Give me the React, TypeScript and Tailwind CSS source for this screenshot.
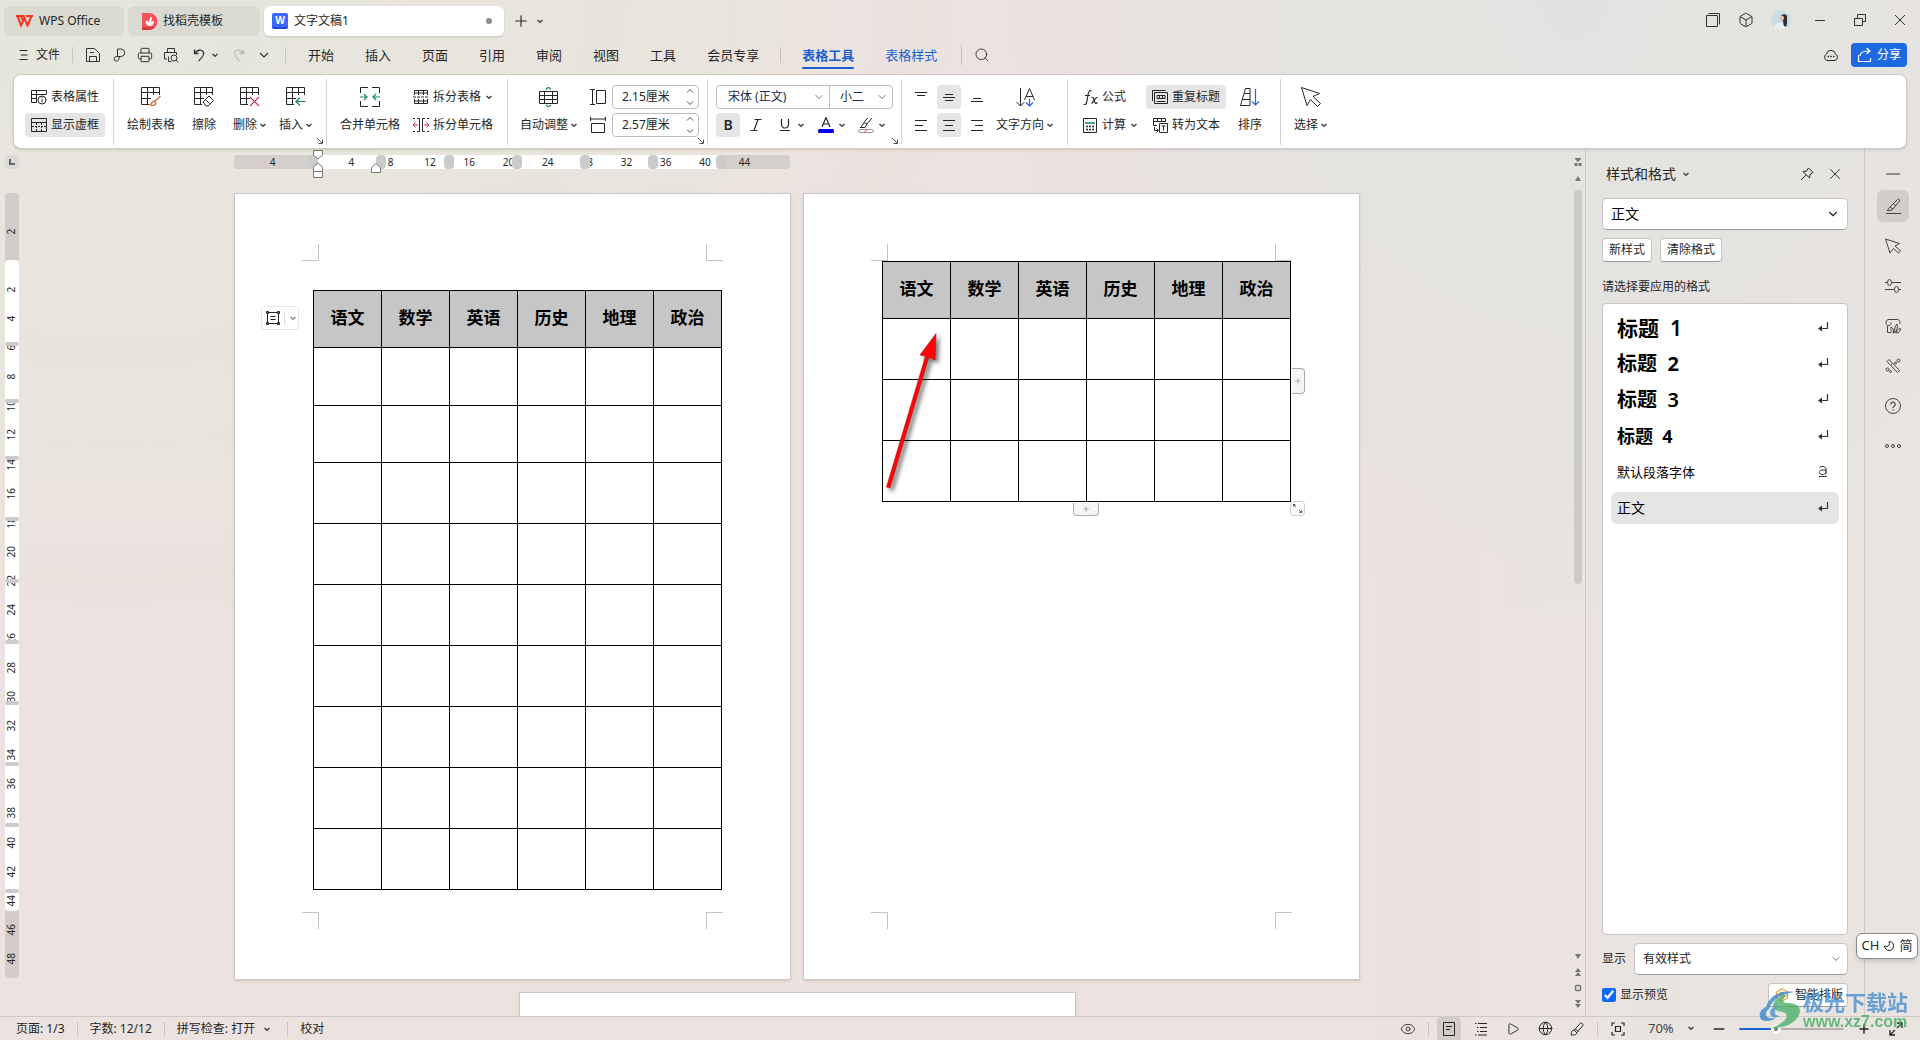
import type { ReactNode } from "react";
import {
  Box,
  ChevronDown,
  Eye,
  Globe,
  Minus,
  Moon,
  Play,
  Plus,
  Printer,
  Search,
  X,
} from "lucide-react";

const MENU_ITEMS = ["开始", "插入", "页面", "引用", "审阅", "视图", "工具", "会员专享"];

const SUBJECTS = ["语文", "数学", "英语", "历史", "地理", "政治"];

const H_TICKS = ["4", "", "4", "8", "12", "16", "20", "24", "28", "32", "36", "40", "44"];

const V_TICKS = ["2", "", ...Array.from({ length: 24 }, (_, i) => String((i + 1) * 2))];

// 表格行边界在垂直标尺上的位置
const ROW_EDGES = [149, 206, 263, 324, 386, 447, 508, 569, 630, 696];

const STYLES = [
  { label: "标题 1", className: "text-[21px] font-semibold", mark: "para" },
  { label: "标题 2", className: "text-[20px] font-bold", mark: "para" },
  { label: "标题 3", className: "text-[20px] font-semibold", mark: "para" },
  { label: "标题 4", className: "text-[18px] font-bold", mark: "para" },
  { label: "默认段落字体", className: "text-[13px]", mark: "char" },
  { label: "正文", className: "text-[14px]", mark: "para" },
];

function Svg({ size = 16, className = "", children }: { size?: number; className?: string; children: ReactNode }) {
  return (
    <svg
      width={size}
      height={size}
      viewBox={`0 0 ${size} ${size}`}
      fill="none"
      stroke="currentColor"
      strokeWidth="1"
      className={`shrink-0 ${className}`}
      aria-hidden="true"
    >
      {children}
    </svg>
  );
}

function Caret({ className = "" }: { className?: string }) {
  return (
    <svg width="8" height="8" viewBox="0 0 8 8" fill="none" stroke="#444" strokeWidth="1.5" className={`shrink-0 ${className}`} aria-hidden="true">
      <path d="M1.5 3 4 5.3 6.500 3" />
    </svg>
  );
}

const GRID_20 = "M8 17.500H.5V.5h18V8M.5 5.500h18M6.500 .5v17M.5 11.500H10M12.500 .5V8";

/* ---------- 功能区按钮 ---------- */

function BigButton({ icon, label, caret, className }: { icon: ReactNode; label: string; caret?: boolean; className: string }) {
  return (
    <button type="button" className={`flex flex-col items-center gap-1 ${className}`}>
      <span className="flex h-6 items-center">{icon}</span>
      <span className="flex h-6 items-center gap-0.5 whitespace-nowrap">
        {label}
        {caret && <Caret />}
      </span>
    </button>
  );
}

function SmallButton({ icon, label, caret, active }: { icon: ReactNode; label: string; caret?: boolean; active?: boolean }) {
  return (
    <button
      type="button"
      className={`flex h-6 items-center gap-1 rounded px-1.5 whitespace-nowrap ${active ? "bg-[#e5e5e5]" : ""}`}
    >
      {icon}
      {label}
      {caret && <Caret />}
    </button>
  );
}

function IconButton({ label, active, children }: { label: string; active?: boolean; children: ReactNode }) {
  return (
    <button
      type="button"
      aria-label={label}
      className={`flex size-6 shrink-0 items-center justify-center rounded ${active ? "bg-[#e5e5e5]" : ""}`}
    >
      {children}
    </button>
  );
}

function Group({ className = "", launcher, children }: { className?: string; launcher?: boolean; children: ReactNode }) {
  return (
    <div className={`relative flex h-[66px] shrink-0 items-start border-r border-[#d4d4d4] pt-1.5 ${className}`}>
      {children}
      {launcher && (
        <button type="button" aria-label="更多设置" className="absolute right-0.5 bottom-0 text-[#555]">
          <Svg size={8}>
            <path d="M1 1l5 5M6.500 2.500v4h-4" />
          </Svg>
        </button>
      )}
    </div>
  );
}

function SizeInput({ label, value }: { label: string; value: string }) {
  return (
    <div className="flex h-6 w-[87px] items-center rounded border border-[#bdbdbd] pr-1">
      <input aria-label={label} defaultValue={value} className="w-full min-w-0 bg-transparent pl-[9px] outline-none" />
      <div className="flex flex-col gap-1 text-[#555]">
        <button type="button" aria-label="增加">
          <Svg size={8}>
            <path d="M1 5.500 4 2.500 7 5.500" />
          </Svg>
        </button>
        <button type="button" aria-label="减少">
          <Svg size={8}>
            <path d="M1 2.500 4 5.500 7 2.500" />
          </Svg>
        </button>
      </div>
    </div>
  );
}

function AlignIcon({ d }: { d: string }) {
  return (
    <Svg size={14}>
      <path d={d} />
    </Svg>
  );
}

/* ---------- 标题栏 ---------- */

function TitleBar() {
  return (
    <header className="flex h-9 shrink-0 items-end gap-1 pl-1">
      <button type="button" className="flex h-[30px] w-[120px] items-center gap-1.5 rounded-md bg-[#dadad1] pl-3">
        <svg width="17" height="12" viewBox="0 0 17 12" fill="none" stroke="#f5341f" strokeWidth="2" aria-hidden="true">
          <path d="M0 1h8.500M10 1h7M1.500 1l3.500 9.500L8.500 3l3 7.500L15.500 1M5 1l1.500 4" />
        </svg>
        WPS Office
      </button>
      <button type="button" className="flex h-[30px] w-[132px] items-center gap-1.5 rounded-md bg-[#dadad3] pl-3.5">
        <svg width="15" height="17" viewBox="0 0 15 17" aria-hidden="true">
          <path d="M0 0h7a8 8 0 0 1 0 17H0z" fill="#f1545a" />
          <path d="M0 14h13a8 8 0 0 1-5 3H0z" fill="#d93640" />
          <path d="M7.500 13C3 12 3.500 8.500 4 7.500c1.500 0 2.500 1 3 2.500 0-3 .5-5 2.500-6.500C10.500 6 9.500 8 8.500 10c1-1.500 2-2 3.500-2 0 3-1.500 5-4.500 5z" fill="#fff" />
        </svg>
        找稻壳模板
      </button>
      <div className="flex h-[30px] w-[240px] items-center gap-1.5 rounded-md bg-white pr-3 pl-2 shadow-sm">
        <span className="flex h-4 w-4 items-center justify-center rounded-[2px] border-b-2 border-[#1d49d8] bg-[#3c69fb] text-[10px] leading-3 font-bold text-white">
          W
        </span>
        <span className="flex-1">文字文稿1</span>
        <span className="size-1.5 rounded-full bg-[#8b8b8b]" />
      </div>
      <div className="flex h-[30px] items-center gap-1.5 pl-1">
        <button type="button" aria-label="新建">
          <Plus size={18} strokeWidth={1.5} />
        </button>
        <button type="button" aria-label="标签列表">
          <Caret />
        </button>
      </div>
      <div className="ml-auto flex h-[32px] items-center gap-[17px] pr-3 text-[#333]">
        <button type="button" aria-label="窗口">
          <Svg>
            <path d="M1.500 3.500h11v11h-11zM3.500 1.500h11v11" />
          </Svg>
        </button>
        <button type="button" aria-label="应用">
          <Box size={16} strokeWidth={1.5} />
        </button>
        <button type="button" aria-label="账户" className="flex size-5 items-center justify-center overflow-hidden rounded-full bg-[#c9dde2]">
          <svg width="20" height="20" viewBox="0 0 20 20" aria-hidden="true">
            <path d="M3 20c0-5 3-8 7-7l5 5-1 2z" fill="#e8f2f4" />
            <path d="M9 7c1-3 6-4 7-1l0 7c0 3-1 4-3 3l-1-5z" fill="#352a32" />
            <circle cx="10.500" cy="8" r="2.500" fill="#e4bfb0" />
          </svg>
        </button>
        <div className="ml-1 flex items-center gap-6">
          <button type="button" aria-label="最小化">
            <Svg>
              <path d="M3 8.500h10" />
            </Svg>
          </button>
          <button type="button" aria-label="还原">
            <Svg>
              <path d="M2.500 6.500h8v7h-8zM5.500 6V2.500h8v7H11" />
            </Svg>
          </button>
          <button type="button" aria-label="关闭">
            <Svg>
              <path d="M3 3l10 10M13 3 3 13" />
            </Svg>
          </button>
        </div>
      </div>
    </header>
  );
}

/* ---------- 菜单栏 ---------- */

function MenuBar() {
  return (
    <nav className="flex h-[38px] shrink-0 items-center pr-[13px] pl-[18px]">
      <button type="button" className="flex items-center gap-1.5">
        <Svg size={12}>
          <path d="M1.500 1.500h8M3 6h6.500M1.500 10.500h8" />
        </Svg>
        文件
      </button>
      <span className="mx-3 h-4 w-px bg-[#c9c6c2]" />
      <div className="flex items-center gap-2.5 text-[#333]">
        <button type="button" aria-label="保存">
          <Svg>
            <path d="M1.500 1.500h8l5 5v8h-13zM4.500 14.500V9.500h7v5M5 5.500h4" />
          </Svg>
        </button>
        <button type="button" aria-label="输出为PDF">
          <Svg>
            <path d="M6.500 9.500V2h4a3.800 3.800 0 0 1 0 7.500h-5a2.300 2.300 0 1 0 2.200 3l.8-3" />
          </Svg>
        </button>
        <button type="button" aria-label="打印">
          <Printer size={16} strokeWidth={1.5} />
        </button>
        <button type="button" aria-label="打印预览">
          <Svg>
            <path d="M4 12H1.500V5.500h12V8M4.500 5V1.500h7V5M5.500 9.500v5h3" />
            <circle cx="11" cy="11" r="3" />
            <path d="M13 13l2.500 2.500" />
          </Svg>
        </button>
        <button type="button" className="flex items-center gap-1 pl-1" aria-label="撤销">
          <Svg size={14}>
            <path d="M1.500 1.500v4h4M1.500 5.500C4 2 8 1 10 3.500S10 9 5.500 13" strokeWidth="1.300" />
          </Svg>
          <Caret />
        </button>
        <button type="button" aria-label="恢复" className="pl-0.5 text-[#bbb]">
          <Svg size={14}>
            <path d="M12.500 1.500v4h-4M12.500 5.500C10 2 6 1 4 3.500S4 9 8.500 13" strokeWidth="1.300" />
          </Svg>
        </button>
        <button type="button" aria-label="更多" className="pl-1">
          <Svg size={10}>
            <path d="M1 3l4 4 4-4" strokeWidth="1.200" />
          </Svg>
        </button>
      </div>
      <span className="mr-[22px] ml-4 h-4 w-px bg-[#c9c6c2]" />
      <div className="flex items-center gap-[31px] pt-0.5 text-[13px]">
        {MENU_ITEMS.map((item) => (
          <button key={item} type="button">
            {item}
          </button>
        ))}
      </div>
      <span className="mx-[21px] h-4 w-px bg-[#c9c0be]" />
      <div className="flex items-center gap-[31px] pt-0.5 text-[13px] text-[#1a5fd0]">
        <button type="button" className="relative font-bold">
          表格工具
          <span className="absolute inset-x-0 -bottom-1 h-0.5 rounded bg-[#1a5fd0]" />
        </button>
        <button type="button">表格样式</button>
      </div>
      <span className="mr-3 ml-6 h-5 w-px bg-[#c9c0be]" />
      <button type="button" aria-label="搜索">
        <Search size={16} strokeWidth={1.3} />
      </button>
      <div className="ml-auto flex items-center gap-3">
        <button type="button" aria-label="云文档">
          <Svg>
            <path d="M4 13.500a3.500 3.500 0 0 1-.5-6.500 4.600 4.600 0 0 1 9 0 3.500 3.500 0 0 1-.5 6.500z" />
            <path d="M4.500 9.500h1.500M7.300 9.500h1.500M10 9.500h1.500" strokeWidth="1.500" />
          </Svg>
        </button>
        <button type="button" className="flex h-6 items-center gap-1 rounded bg-[#1f69e0] px-1.5 text-white">
          <Svg>
            <path d="M1.500 8v6.500h12V11M3 9c0-3 3-5 9-5M9.500 1l3.500 3-3.500 3" strokeWidth="1.200" />
          </Svg>
          分享
        </button>
      </div>
    </nav>
  );
}

/* ---------- 功能区 ---------- */

function Ribbon() {
  return (
    <section className="z-10 mx-[13px] flex h-[75px] shrink-0 items-start rounded-lg border border-[#cfcac7] bg-white pt-1 shadow-sm">
      <Group className="w-[100px] flex-col gap-1 pl-[11px]">
        <SmallButton
          label="表格属性"
          icon={
            <Svg>
              <path d="M5.500 13.500h-5v-12h15V5M.5 5.500h15M5.500 1.500v12M.5 9.500h5" />
              <circle cx="11" cy="11" r="4" />
              <path d="M11 10v3.500M11 8v1" />
            </Svg>
          }
        />
        <SmallButton
          active
          label="显示虚框"
          icon={
            <Svg>
              <path d="M.5 1.500h15v13H.5zM.5 5.500h15" />
              <path d="M1 9.500h14M5.500 6v8M10.500 6v8" strokeDasharray="2 1" />
            </Svg>
          }
        />
      </Group>

      <Group className="w-[213px] pl-[5px]" launcher>
        <BigButton
          className="w-16"
          label="绘制表格"
          icon={
            <Svg size={20}>
              <path d={GRID_20} />
              <path d="M19.500 9 13 15M13 14c-2 0-2 3-4 4 3 1 6 0 6-2z" stroke="#d0682f" strokeWidth="1.200" />
            </Svg>
          }
        />
        <BigButton
          className="w-[42px]"
          label="擦除"
          icon={
            <Svg size={20}>
              <path d={GRID_20} />
              <path d="M9 15l6-6 4.500 4.500-5.500 5.500h-2zM11.500 12.500l4 4" />
            </Svg>
          }
        />
        <BigButton
          className="w-[50px]"
          label="删除"
          caret
          icon={
            <Svg size={20}>
              <path d={GRID_20} />
              <path d="M10 10l9 9M19 10l-9 9" stroke="#c9304e" strokeWidth="1.200" />
            </Svg>
          }
        />
        <BigButton
          className="w-[42px]"
          label="插入"
          caret
          icon={
            <Svg size={20}>
              <path d={GRID_20} />
              <path d="M19.500 14.500H10M14 10.500l-4 4 4 4" stroke="#138a62" strokeWidth="1.200" />
            </Svg>
          }
        />
      </Group>

      <Group className="w-[181px]">
        <BigButton
          className="w-[86px]"
          label="合并单元格"
          icon={
            <Svg size={20}>
              <path d="M8 .5H.5V6M12 .5h7.500V6M8 19.500H.5V14M12 19.500h7.500V14" />
              <path d="M0 10h7M4 7l3 3-3 3M20 10h-7M16 7l-3 3 3 3" stroke="#138a62" strokeWidth="1.200" />
            </Svg>
          }
        />
        <div className="-ml-1.5 flex flex-col gap-1">
          <SmallButton
            label="拆分表格"
            caret
            icon={
              <Svg>
                <path d="M1.500 6V1.500h13V6M1.500 4h13M5.500 1.500V6M10.500 1.500V6M1.500 10v4.500h13V10M1.500 12h13M5.500 10v4.500M10.500 10v4.500" />
                <path d="M0 8h16" strokeDasharray="3 1" />
              </Svg>
            }
          />
          <SmallButton
            label="拆分单元格"
            icon={
              <Svg>
                <path d="M4 1.500h2.500v13H4M12 1.500H9.500v13H12M0 1.500h2M0 14.500h2M14 1.500h2M14 14.500h2" />
                <path d="M0 8h5M2.500 5.500 0 8l2.500 2.500M16 8h-5M13.500 5.500 16 8l-2.500 2.500" stroke="#c9304e" />
              </Svg>
            }
          />
        </div>
      </Group>

      <Group className="w-[200px]" launcher>
        <BigButton
          className="w-[82px]"
          label="自动调整"
          caret
          icon={
            <Svg size={20}>
              <path d="M.5 4.500h18v12H.5zM.5 8.500h18M.5 12.500h18M5.500 4.500v12M13.500 4.500v12" />
              <path d="M7 2.500 9.500 0 12 2.500M7 18l2.500 2L12 18" stroke="#138a62" strokeWidth="1.200" />
            </Svg>
          }
        />
        <div className="flex flex-col gap-1">
          <label className="flex items-center gap-1.5">
            <Svg>
              <path d="M0 .5h5M0 15.500h5M2.500 .5v15M6.500 1.500h9v13h-9z" />
            </Svg>
            <SizeInput label="行高" value="2.15厘米" />
          </label>
          <label className="flex items-center gap-1.5">
            <Svg>
              <path d="M.5 0v4M15.500 0v4M.5 2h15M1.500 6.500h13v9h-13z" />
            </Svg>
            <SizeInput label="列宽" value="2.57厘米" />
          </label>
        </div>
      </Group>

      <Group className="w-[194px] flex-col gap-1 pl-2" launcher>
        <div className="flex h-6 w-[177px] items-center rounded border border-[#bdbdbd] text-[#1b2b4b]">
          <div className="relative h-full w-[113px] border-r border-[#bdbdbd]">
            <select aria-label="字体" className="h-full w-full appearance-none pl-[11px] outline-none">
              <option>宋体 (正文)</option>
            </select>
            <ChevronDown size={12} strokeWidth={1.3} className="pointer-events-none absolute top-[5px] right-1" />
          </div>
          <div className="relative h-full flex-1">
            <select aria-label="字号" className="h-full w-full appearance-none pl-2.5 outline-none">
              <option>小二</option>
            </select>
            <ChevronDown size={12} strokeWidth={1.3} className="pointer-events-none absolute top-[5px] right-1" />
          </div>
        </div>
        <div className="flex items-center">
          <IconButton label="加粗" active>
            <b className="text-sm font-semibold">B</b>
          </IconButton>
          <span className="w-1" />
          <IconButton label="倾斜">
            <Svg size={12}>
              <path d="M4.500 .5h7M.5 11.500h7M8 .5l-4 11" strokeWidth="1.200" />
            </Svg>
          </IconButton>
          <span className="w-1" />
          <button type="button" aria-label="下划线" className="flex h-6 w-10 items-center justify-center gap-1.5">
            <Svg size={12}>
              <path d="M2.500 0v5.500a3.500 3.500 0 0 0 7 0V0M1 11.500h10" strokeWidth="1.200" />
            </Svg>
            <Caret />
          </button>
          <button type="button" aria-label="字体颜色" className="flex h-6 w-10 items-center justify-center gap-1">
            <Svg size={16}>
              <path d="M4 10 8 .5 12 10M5.500 7h5" strokeWidth="1.200" />
              <rect x="0" y="12" width="16" height="4" rx="1.500" fill="#0000f0" stroke="none" />
            </Svg>
            <Caret />
          </button>
          <button type="button" aria-label="突出显示" className="flex h-6 w-10 items-center justify-center gap-1">
            <Svg size={16}>
              <path d="M14 1 9 7 6 5.500 9.500 1M6 5.500 3 10.500h4L9 7M2 10.500h2" />
              <rect x=".5" y="12.500" width="15" height="3" rx="1.500" stroke="#999" />
              <path d="M6 15.500l3-3" stroke="#e03030" />
            </Svg>
            <Caret />
          </button>
        </div>
      </Group>

      <Group className="w-[166px] pl-[7px]">
        <div className="grid grid-cols-3 gap-1">
          <IconButton label="顶端对齐">
            <AlignIcon d="M1 2.500h12M3 5.500h8" />
          </IconButton>
          <IconButton label="垂直居中" active>
            <AlignIcon d="M3 4.500h8M1 7.500h12M3 10.500h8" />
          </IconButton>
          <IconButton label="底端对齐">
            <AlignIcon d="M3 8.500h8M1 11.500h12" />
          </IconButton>
          <IconButton label="左对齐">
            <AlignIcon d="M1 2.500h12M1 7.500h8M1 12.500h12" />
          </IconButton>
          <IconButton label="居中" active>
            <AlignIcon d="M1 2.500h12M3 7.500h8M1 12.500h12" />
          </IconButton>
          <IconButton label="右对齐">
            <AlignIcon d="M1 2.500h12M5 7.500h8M1 12.500h12" />
          </IconButton>
        </div>
        <BigButton
          className="w-[72px]"
          label="文字方向"
          caret
          icon={
            <Svg size={20}>
              <path d="M5.500 1v18M1.500 15l4 4 4-4M9.500 13 14.500 1.500 19.500 13M11 9.500h7" />
              <path d="M14.500 12v7M11 15.500l3.500 3.500 3.500-3.500" stroke="#2a62e0" strokeWidth="1.200" />
            </Svg>
          }
        />
      </Group>

      <Group className="w-[213px] pl-[9px]">
        <div className="flex w-[69px] flex-col gap-1">
          <SmallButton
            label="公式"
            icon={
              <Svg size={15}>
                <path d="M8.500 1c-2-1-3 1-3.500 4l-1.500 8c-.5 2-2 2-3 1.500M2 5.500h5M8.500 7.500c2-1 2 1 3 4s1.500 2 3 1M14.500 7.500c-2-.5-3 3-6 6" strokeWidth="1.200" />
              </Svg>
            }
          />
          <SmallButton
            label="计算"
            caret
            icon={
              <Svg size={15}>
                <path d="M.5 .5h13v14H.5z" />
                <path d="M2 5h10" stroke="#138a62" strokeWidth="1.500" />
                <path d="M3 8.500h2M6 8.500h2M9 8.500h2M3 11.500h2M6 11.500h2M9 11.500h2" strokeWidth="1.500" />
              </Svg>
            }
          />
        </div>
        <div className="flex flex-col gap-1">
          <SmallButton
            active
            label="重复标题"
            icon={
              <Svg>
                <path d="M.5 12V1.500h13M2.500 3.500h13v11h-13zM5 6.500h8v3H5zM7.500 6.500v3M10.500 6.500v3M4.500 12.500h9" />
              </Svg>
            }
          />
          <SmallButton
            label="转为文本"
            icon={
              <Svg>
                <path d="M5 8.500H1.500v-7h12V5M1.500 4.500h12M5.500 1.500V5M9.500 1.500V5M2.500 10v3.500H6M4.500 11.500l2 2-2 2M7.500 6.500h8v9h-8zM9.500 9h4M11.500 9v4.500" />
              </Svg>
            }
          />
        </div>
        <BigButton
          className="w-12"
          label="排序"
          icon={
            <Svg size={20}>
              <path d="M5.500 1.500h4.500v17H.5zM4.500 6.500h5.500M2.500 12.500h7.500" />
              <path d="M15.500 2v16M12 14.500l3.500 3.500 3.500-3.500" stroke="#2a62e0" strokeWidth="1.200" />
            </Svg>
          }
        />
      </Group>

      <div className="pt-1.5">
        <BigButton
          className="w-[60px]"
          label="选择"
          caret
          icon={
            <Svg size={20}>
              <path d="M.5 .5 18.500 6.500 12 9.500l7.500 7-3 3-7-7L6 18.500z" />
            </Svg>
          }
        />
      </div>
    </section>
  );
}

/* ---------- 标尺 ---------- */

function HorizontalRuler() {
  return (
    <div className="relative h-3.5 w-[556px] rounded bg-[#d5cfcb] text-[10px] leading-[14px]">
      <div className="absolute inset-y-0 right-[70px] left-[84px] bg-white" />
      <div className="relative flex pr-[26px] pl-[19px]">
        {H_TICKS.map((tick, i) => (
          <span key={i} className="flex-1 text-center">
            {tick}
          </span>
        ))}
      </div>
      <div className="absolute inset-y-0 left-[74px] flex gap-[58px]">
        {Array.from({ length: 7 }, (_, i) => (
          <span key={i} className="w-2.5 rounded bg-[#cbcbcb]" />
        ))}
      </div>
      <svg width="10" height="30" viewBox="0 0 10 30" fill="#fff" stroke="#777" className="absolute -top-1.5 left-[79px]" aria-hidden="true">
        <path d="M.5 1.500h9V6L5 10 .5 6zM.5 22.500V18L5 14l4.500 4v4.500zM.5 22.500h9v6h-9z" />
      </svg>
      <svg width="10" height="10" viewBox="0 0 10 10" fill="#fff" stroke="#777" className="absolute top-2 left-[137px]" aria-hidden="true">
        <path d="M.5 9.500V4.500L5 .5l4.500 4v5z" />
      </svg>
    </div>
  );
}

function VerticalRuler() {
  return (
    <div className="relative mt-[30px] flex h-[785px] w-3.5 shrink-0 flex-col rounded bg-[#d2cdc9] pt-6 pb-[5px] text-[10px]">
      <div className="absolute inset-x-0 top-[67px] bottom-[67px] rounded bg-white" />
      {V_TICKS.map((tick, i) => (
        <span key={i} className="relative flex flex-1 items-center justify-center">
          <span className="-rotate-90">{tick}</span>
        </span>
      ))}
      {ROW_EDGES.map((top) => (
        <span key={top} className="absolute inset-x-0 h-1 rounded-full bg-[#cbcbcb]" style={{ top }} />
      ))}
    </div>
  );
}

/* ---------- 文档页面 ---------- */

function CropMarks() {
  return (
    <>
      <span className="absolute top-[50px] left-[67px] size-[17px] border-r border-b border-[#c4c4c4]" />
      <span className="absolute top-[50px] right-[67px] size-[17px] border-b border-l border-[#c4c4c4]" />
      <span className="absolute bottom-[50px] left-[67px] size-[17px] border-t border-r border-[#c4c4c4]" />
      <span className="absolute right-[67px] bottom-[50px] size-[17px] border-t border-l border-[#c4c4c4]" />
    </>
  );
}

function SubjectTable({ rows }: { rows: string[] }) {
  return (
    <table className="relative w-[409px] table-fixed border-collapse">
      <thead>
        <tr className="h-[57px] bg-[#c6c6c6]">
          {SUBJECTS.map((s) => (
            <th key={s} className="border border-black p-0 pb-0.5 text-[17px] leading-6 font-bold text-black">
              {s}
            </th>
          ))}
        </tr>
      </thead>
      <tbody>
        {rows.map((height, i) => (
          <tr key={i} className={height}>
            {SUBJECTS.map((s) => (
              <td key={s} className="border border-black p-0" />
            ))}
          </tr>
        ))}
      </tbody>
    </table>
  );
}

function Page({ className = "", children }: { className?: string; children?: ReactNode }) {
  return (
    <article className={`relative h-[787px] w-[557px] shrink-0 border border-[#c9c9c9] bg-white pl-[78px] shadow-sm ${className}`}>
      <CropMarks />
      {children}
    </article>
  );
}

function Workspace() {
  return (
    <main className="flex min-w-0 flex-1 overflow-hidden">
      <div className="flex w-6 shrink-0 flex-col items-start pt-1.5 pl-[5px]">
        <button type="button" aria-label="制表符" className="flex size-3.5 shrink-0 items-center justify-center rounded bg-[#dad9d8] text-[#666]">
          <Svg size={6}>
            <path d="M1 0v5h5" strokeWidth="2" />
          </Svg>
        </button>
        <div className="-mt-1.5">
          <VerticalRuler />
        </div>
      </div>

      <div className="flex min-w-0 flex-1 flex-col items-center overflow-hidden pt-1.5">
        <div className="flex w-[1126px] flex-col gap-6">
          <HorizontalRuler />
          <div className="flex gap-3">
            <Page className="pt-24">
              <SubjectTable
                rows={[
                  "h-[58px]",
                  "h-[57px]",
                  "h-[61px]",
                  "h-[61px]",
                  "h-[61px]",
                  "h-[61px]",
                  "h-[61px]",
                  "h-[61px]",
                  "h-[61px]",
                ]}
              />
              <button
                type="button"
                aria-label="表格选项"
                className="absolute top-28 left-[26px] flex h-6 w-[38px] items-center gap-1 rounded border border-[#e8e8e8] bg-white pl-1"
              >
                <Svg size={14}>
                  <path d="M1.500 1.500h11v11h-11zM4.500 5.500h5M4.500 8.500h5" />
                  <path d="M.5 .5h2v2h-2zM11.500 .5h2v2h-2zM.5 11.500h2v2h-2zM11.500 11.500h2v2h-2z" />
                </Svg>
                <span className="h-3.5 w-px bg-[#ddd]" />
                <Caret className="opacity-60" />
              </button>
            </Page>
            <Page className="pt-[67px]">
              <SubjectTable rows={["h-[61px]", "h-[61px]", "h-[61px]"]} />
              <button
                type="button"
                aria-label="添加列"
                className="absolute top-[174px] left-[488px] flex h-[26px] w-[13px] items-center justify-center rounded-r border border-l-0 border-[#aaa] bg-[#f5f5f5] text-[#888]"
              >
                <Plus size={8} strokeWidth={2} />
              </button>
              <button
                type="button"
                aria-label="添加行"
                className="absolute top-[309px] left-[269px] flex h-[13px] w-[26px] items-center justify-center rounded-b border border-t-0 border-[#aaa] bg-[#f5f5f5] text-[#888]"
              >
                <Plus size={8} strokeWidth={2} />
              </button>
              <span className="absolute top-[307px] left-[486px] flex size-[15px] items-center justify-center rounded-sm border border-[#ccc] bg-white text-[#555]">
                <Svg size={11}>
                  <path d="M1.500 3.500v-2h2M1.500 1.500l2.500 2.500M9.500 7.500v2h-2M9.500 9.500 7 7" />
                </Svg>
              </span>
              <svg
                width="64"
                height="166"
                viewBox="0 0 64 166"
                className="pointer-events-none absolute top-[136px] left-[80px] drop-shadow-[3px_3px_2px_rgba(0,0,0,0.55)]"
                aria-hidden="true"
              >
                <path d="M2.500 157 41.500 26l-5.500-1L52 3.500 51 30l-6-3L6 158z" fill="#fb0505" stroke="#c01010" strokeWidth=".6" />
              </svg>
            </Page>
          </div>
        </div>
        <div className="mt-3">
          <Page />
        </div>
      </div>

      <div className="flex w-[15px] shrink-0 flex-col items-center pt-[5px] pb-1 text-[#777]">
        <Svg>
          <path d="M5 4h6v1L8 8 5 5zM4.500 9h3v3h-3zM8.500 9h3v3h-3z" fill="currentColor" stroke="none" />
        </Svg>
        <Svg>
          <path d="M5 11h6L8 6z" fill="currentColor" stroke="none" />
        </Svg>
        <div className="mt-1 w-2 flex-1">
          <div className="h-[52%] rounded bg-[#cacac8]" />
        </div>
        <Svg>
          <path d="M5 6h6l-3 5z" fill="currentColor" stroke="none" />
        </Svg>
        <Svg>
          <path d="M5 8h6L8 4zM5 12h6L8 8z" fill="currentColor" stroke="none" />
        </Svg>
        <Svg>
          <rect x="5.500" y="5.500" width="5" height="5" rx="1" strokeWidth="1.500" />
        </Svg>
        <Svg>
          <path d="M5 4h6L8 8zM5 8h6l-3 4z" fill="currentColor" stroke="none" />
        </Svg>
      </div>
    </main>
  );
}

/* ---------- 样式和格式窗格 ---------- */

function StylePane() {
  return (
    <aside className="flex w-[279px] shrink-0 flex-col border-l border-[#cfcac8] px-4 pb-[9px]">
      <div className="flex h-[49px] shrink-0 items-center pt-px pr-1 pl-1 text-sm">
        <button type="button" className="flex items-center gap-1.5">
          样式和格式
          <Caret />
        </button>
        <button type="button" aria-label="固定" className="ml-auto">
          <Svg size={14}>
            <path d="M8.500 1 13 5.500l-3 2L9.500 11 3 4.500 6.500 4zM6 8l-5 5" />
          </Svg>
        </button>
        <button type="button" aria-label="关闭窗格" className="ml-3">
          <X size={18} strokeWidth={1.2} />
        </button>
      </div>

      <div className="relative h-8 shrink-0">
        <select
          aria-label="当前样式"
          className="h-8 w-full appearance-none rounded-[5px] border border-[#c9c3c1] border-b-[#999] bg-white pl-2 text-sm text-black outline-none"
        >
          <option>正文</option>
        </select>
        <ChevronDown size={14} strokeWidth={2} className="pointer-events-none absolute top-[9px] right-2" />
      </div>

      <div className="mt-2 flex shrink-0 gap-2">
        <button type="button" className="h-6 rounded border border-[#c9c3c1] border-b-[#999] bg-white px-1.5">
          新样式
        </button>
        <button type="button" className="h-6 rounded border border-[#c9c3c1] border-b-[#999] bg-white px-1.5">
          清除格式
        </button>
      </div>

      <p className="flex h-[41px] shrink-0 items-center pt-2">请选择要应用的格式</p>

      <ul className="flex min-h-0 flex-1 flex-col gap-1 rounded border border-[#c9c3c1] bg-white p-2 text-black">
        {STYLES.map((style) => (
          <li key={style.label}>
            <button
              type="button"
              className={`flex h-8 w-full items-center justify-between rounded-md pr-2.5 pl-1.5 whitespace-pre ${
                style.label === "正文" ? "bg-[#e5e5e5]" : ""
              }`}
            >
              <span className={`leading-8 ${style.className}`}>{style.label.replace(" ", "  ")}</span>
              {style.mark === "para" ? (
                <Svg size={12} className="text-[#333]">
                  <path d="M10.500 0v6.500H2" strokeWidth="1.200" />
                  <path d="M1 6.500 5 3.500v6z" fill="currentColor" stroke="none" />
                </Svg>
              ) : (
                <Svg size={12} className="text-[#333]">
                  <path d="M2.500 1.500C3.500 0 9 0 9 3v5.500M9 4H5C1.500 4 1.500 8.500 5 8.500S9 6 9 4.500M2 10.500h8" />
                </Svg>
              )}
            </button>
          </li>
        ))}
      </ul>

      <label className="mt-2 flex shrink-0 items-center gap-2">
        显示
        <span className="relative flex-1">
          <select className="h-8 w-full appearance-none rounded-[5px] border border-[#c9c3c1] border-b-[#999] bg-white pl-2 outline-none">
            <option>有效样式</option>
          </select>
          <ChevronDown size={12} strokeWidth={1.3} className="pointer-events-none absolute top-2.5 right-1.5" />
        </span>
      </label>

      <div className="mt-2 flex h-6 shrink-0 items-center justify-between">
        <label className="flex items-center gap-1">
          <input type="checkbox" defaultChecked className="size-3.5 accent-[#0d6bfb]" />
          显示预览
        </label>
        <button type="button" className="flex h-6 items-center gap-1.5 rounded border border-[#c9c3c1] border-b-[#999] bg-white pr-1 pl-1.5">
          <Svg size={14} className="text-[#eda23a]">
            <path d="M7 .8 12.500 4v6L7 13.200 1.500 10V4z" strokeWidth="1.300" />
            <path d="M9 5H6C4.500 5 4.500 7 6 7h2c1.500 0 1.500 2 0 2H5" strokeWidth="1.300" />
          </Svg>
          智能排版
        </button>
      </div>
    </aside>
  );
}

function SideBar() {
  return (
    <aside className="flex w-14 shrink-0 flex-col items-center gap-2 border-l border-[#cfcac8] pt-4 text-[#444]">
      <button type="button" aria-label="收起" className="flex h-[17px] items-center">
        <span className="h-0.5 w-3.5 bg-[#8d8b8a]" />
      </button>
      <button type="button" aria-label="样式" className="flex size-8 items-center justify-center rounded-md bg-[#d2cdcb]">
        <Svg>
          <path d="M1 15.500h15M2 12.500c1.500 0 1-2 2.500-3L12.500 1.500c1-1 3 .5 2 1.500L8 11c-1 1.500-3 1.500-6 1.500zM5 9l3 2M8.500 6l2.500 2" />
        </Svg>
      </button>
      <button type="button" aria-label="选择" className="flex size-8 items-center justify-center">
        <Svg>
          <path d="M.5 1 14.500 5.500 10 8l5.500 4.500-2 2.500L8.500 10.500 5 15z" />
        </Svg>
      </button>
      <button type="button" aria-label="属性" className="flex size-8 items-center justify-center">
        <Svg>
          <path d="M0 4.500h2.500M7 4.500h9M0 11.500h9M13.500 11.500H16" />
          <ellipse cx="4.500" cy="4.500" rx="2" ry="3" />
          <ellipse cx="11.500" cy="11.500" rx="2" ry="3" />
        </Svg>
      </button>
      <button type="button" aria-label="素材" className="flex size-8 items-center justify-center">
        <Svg>
          <path d="M6 14.500H2.500v-7C0 6 .5 1.500 4 1.500h8c3 0 3.500 3 2.500 4.500M3 7.500c3 .5 3-2 3-3M8.500 15c-3-2-3-4-2.500-6 2 1 3 3 2.500 6zM10 15c-1-4 0-7 2-9 1 3 0 6-2 9zM11 15c1-3 2-4 4.500-4.500 0 3-1.500 4.500-4.500 4.500z" />
        </Svg>
      </button>
      <button type="button" aria-label="工具" className="flex size-8 items-center justify-center">
        <Svg>
          <path d="M2 3.500 4 1.500l10.500 11-2 2zM6 7l2-2" />
          <circle cx="13.500" cy="2.500" r="1.500" />
          <circle cx="10.500" cy="5" r="1" />
          <circle cx="2.500" cy="11.500" r="1.500" />
          <circle cx="5.500" cy="13.500" r="1" />
        </Svg>
      </button>
      <button type="button" aria-label="帮助" className="flex size-8 items-center justify-center">
        <Svg>
          <circle cx="8" cy="8" r="7.500" />
          <path d="M5.800 6.500a2.200 2.200 0 1 1 3.500 1.600c-.9.600-1.300.9-1.300 2M8 11.300v1.300" strokeWidth="1.200" />
        </Svg>
      </button>
      <button type="button" aria-label="更多" className="flex size-8 items-center justify-center">
        <Svg>
          <circle cx="2" cy="8" r="1.500" />
          <circle cx="8" cy="8" r="1.500" />
          <circle cx="14" cy="8" r="1.500" />
        </Svg>
      </button>
    </aside>
  );
}

/* ---------- 状态栏 ---------- */

function StatusBar() {
  return (
    <footer className="flex h-6 shrink-0 items-center border-t border-[#cfc8c6] pr-3 pl-4">
      <div className="flex items-center gap-3">
        <span>页面: 1/3</span>
        <span className="h-3.5 w-px bg-[#cbc3c1]" />
        <span>字数: 12/12</span>
        <span className="h-3.5 w-px bg-[#cbc3c1]" />
        <button type="button" className="flex items-center gap-2 pr-1">
          拼写检查: 打开
          <Caret />
        </button>
        <span className="h-3.5 w-px bg-[#cbc3c1]" />
        <button type="button">校对</button>
      </div>
      <div className="ml-auto flex items-center gap-2">
        <IconButton label="护眼模式">
          <Eye size={16} strokeWidth={1.3} />
        </IconButton>
        <span className="h-3.5 w-px bg-[#cbc3c1]" />
        <button type="button" aria-label="页面视图" className="flex size-6 items-center justify-center rounded bg-[#d3cbc9]">
          <Svg size={14}>
            <path d="M1.500 .5h11v13h-11zM4 4.500h6M4 7.500h4" />
          </Svg>
        </button>
        <IconButton label="大纲">
          <Svg size={14}>
            <path d="M4 1.500h9M6 5.500h7M6 9.500h7M4 13h9M1 1.500h1.500M3 5.500h1.500M3 9.500h1.500M1 13h1.500" />
          </Svg>
        </IconButton>
        <IconButton label="阅读版式">
          <Play size={14} strokeWidth={1.6} />
        </IconButton>
        <IconButton label="网页版式">
          <Globe size={15} strokeWidth={1.6} />
        </IconButton>
        <IconButton label="写作模式">
          <Svg size={14}>
            <path d="M1 13c1-4 0-4 3-5l3 3c-1 2-2 2-6 2zM4.500 8 10 1.500c1.500-1.500 4 1 2.500 2.500L7 10.500M5.500 7l2.500 2.500" />
          </Svg>
        </IconButton>
        <span className="h-3.5 w-px bg-[#cbc3c1]" />
        <IconButton label="全屏">
          <Svg size={14}>
            <path d="M1 4V1h3M10 1h3v3M13 10v3h-3M4 13H1v-3M4.500 4.500h5v5h-5z" strokeWidth="1.200" />
          </Svg>
        </IconButton>
        <button type="button" className="flex w-[61px] items-center justify-between pr-1 pl-2.5 text-[13px] text-[#444]">
          70%
          <Caret />
        </button>
        <IconButton label="缩小">
          <Minus size={16} strokeWidth={2.5} />
        </IconButton>
        <input
          type="range"
          aria-label="缩放"
          defaultValue={34}
          className="h-0.5 w-[105px] appearance-none rounded bg-[linear-gradient(to_right,#1f63d8_36%,#b5aeac_36%)] [&::-webkit-slider-thumb]:size-2.5 [&::-webkit-slider-thumb]:appearance-none [&::-webkit-slider-thumb]:rounded-full [&::-webkit-slider-thumb]:border-[3px] [&::-webkit-slider-thumb]:border-white [&::-webkit-slider-thumb]:bg-[#777]"
        />
        <IconButton label="放大">
          <Plus size={14} strokeWidth={2.5} />
        </IconButton>
        <IconButton label="适应窗口">
          <Svg size={14}>
            <path d="M8 1h5v5M13 1 8 6M6 13H1V8M1 13l5-5" strokeWidth="1.300" />
          </Svg>
        </IconButton>
      </div>
    </footer>
  );
}

function Watermark() {
  return (
    <div className="pointer-events-none absolute right-3 bottom-2.5 z-20 flex items-center gap-0.5 opacity-80">
      <svg width="42" height="38" viewBox="0 0 42 38" aria-hidden="true">
        <path d="M35 1C20-1 11 5 7 16c-7 3-8 10-4 13 4 2 10 1 14-2-5 1-10 0-10-4 0-2 1-4 3-5C13 9 22 3 35 1z" fill="#3d86cc" />
        <path d="M30 3C20 5 14 10 14 15c0 4 4 5 9 6 6 1 6 5 2 9-3 3-8 5-13 7 15 1 28-7 29-17 0-6-6-8-13-8-6 0-5-5 2-9z" fill="#4fb06b" />
        <path d="M20 16c-5-1-9 2-9 6s5 6 10 3c-4 0-6-2-5-5 0-2 2-3 4-4z" fill="#4a90d0" />
      </svg>
      <div className="flex flex-col">
        <span className="text-[21px] leading-6 font-bold text-[#4a90d0]">极光下载站</span>
        <span className="font-['Liberation_Sans',sans-serif] text-base leading-4 font-bold text-[#45ad62]">www.xz7.com</span>
      </div>
    </div>
  );
}

export default function App() {
  return (
    <div className="relative flex h-screen flex-col overflow-hidden bg-[#ece2df] bg-[radial-gradient(ellipse_45%_60%_at_6%_0%,#e6e6dd_0%,#e8e5dd_50%,transparent_100%),radial-gradient(ellipse_30%_60%_at_82%_0%,#e2e3e1_0%,#e5e3e0_50%,transparent_100%),linear-gradient(to_right,transparent_70%,#e9e4e0_90%)] font-['Noto_Sans','Noto_Sans_CJK_SC',sans-serif] text-xs text-[#262626]">
      <TitleBar />
      <MenuBar />
      <Ribbon />
      <div className="flex min-h-0 flex-1">
        <Workspace />
        <StylePane />
        <SideBar />
      </div>
      <StatusBar />

      {/* 输入法状态 */}
      <div className="absolute right-0.5 bottom-[81px] z-20 flex h-[26px] w-[62px] items-center justify-center gap-1 rounded-md border border-[#888] bg-white text-[13px] shadow-md">
        CH
        <Moon size={12} strokeWidth={2} className="-scale-x-100" />
        简
      </div>
      <Watermark />
    </div>
  );
}
